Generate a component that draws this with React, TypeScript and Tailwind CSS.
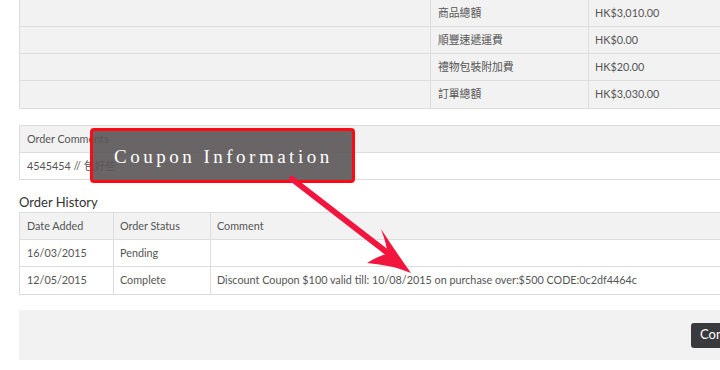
export default function App() {
  const totals = [
    { label: '商品總額', value: 'HK$3,010.00' },
    { label: '順豐速遞運費', value: 'HK$0.00' },
    { label: '禮物包裝附加費', value: 'HK$20.00' },
    { label: '訂單總額', value: 'HK$3,030.00' },
  ];

  const history = [
    { date: '16/03/2015', status: 'Pending', comment: '' },
    {
      date: '12/05/2015',
      status: 'Complete',
      comment: 'Discount Coupon $100 valid till: 10/08/2015 on purchase over:$500 CODE:0c2df4464c',
    },
  ];

  return (
    <div
      className="relative w-[720px] h-[370px] overflow-hidden bg-white text-[10.8px] text-[#555]"
      style={{ fontFamily: 'Lato, "Noto Sans CJK TC", sans-serif' }}
    >
      <div className="w-[760px] pl-[19px]">
        {/* Totals */}
        <div className="border-x border-b border-[#ddd] bg-[#f2f2f2]">
          {totals.map((row) => (
            <div key={row.label} className="flex h-[27px] border-b border-[#ddd] last:border-b-0">
              <div className="w-[411px] border-r border-[#ddd]" />
              <div className="w-[158px] border-r border-[#ddd] pl-[7px] flex items-center">{row.label}</div>
              <div className="flex-1 pl-[6px] flex items-center">{row.value}</div>
            </div>
          ))}
        </div>

        {/* Order comments */}
        <div className="mt-[16px] border border-[#ddd]">
          <div className="h-[27px] bg-[#f2f2f2] border-b border-[#ddd] pl-[7px] flex items-center">Order Comments</div>
          <div className="h-[26px] pl-[7px] flex items-center">4545454 // 包好些</div>
        </div>

        {/* Order history */}
        <div className="mt-[12px] text-[13px] text-[#333] leading-[20px]">Order History</div>
        <div className="border border-[#ddd]">
          <div className="flex h-[27px] bg-[#f2f2f2] border-b border-[#ddd]">
            <div className="w-[94px] border-r border-[#ddd] pl-[7px] flex items-center">Date Added</div>
            <div className="w-[97px] border-r border-[#ddd] pl-[6px] flex items-center">Order Status</div>
            <div className="flex-1 pl-[6px] flex items-center">Comment</div>
          </div>
          {history.map((row) => (
            <div key={row.date} className="flex h-[27px] border-b border-[#ddd] last:border-b-0">
              <div className="w-[94px] border-r border-[#ddd] pl-[7px] flex items-center">{row.date}</div>
              <div className="w-[97px] border-r border-[#ddd] pl-[6px] flex items-center">{row.status}</div>
              <div className="flex-1 pl-[6px] flex items-center">{row.comment}</div>
            </div>
          ))}
        </div>

        {/* Buttons panel */}
        <div className="mt-[15px] h-[50px] bg-[#f2f2f2] flex items-center pl-[672px]">
          <button className="h-[25px] px-[9px] rounded-[3px] bg-[#3a3a3e] text-white text-[13px]">Continue</button>
        </div>
      </div>

      {/* Coupon annotation */}
      <div
        className="absolute left-[90px] top-[128px] w-[265px] h-[55px] rounded-[4px] border-[3px] border-[#ff0a14] bg-[#5a5556]/90 flex items-center pl-[21px] pt-[4px] text-white text-[19px] tracking-[3.5px]"
        style={{ fontFamily: '"Liberation Serif", serif' }}
      >
        Coupon Information
      </div>
      <svg className="absolute left-0 top-0 pointer-events-none" width="720" height="370" viewBox="0 0 720 370">
        <line x1="292" y1="179" x2="393" y2="257" stroke="#f2163f" strokeWidth="6" strokeLinecap="round" />
        <path d="M411 273 Q396 252 381 229 Q388 248 387 254 Q378 256 367 263 Q392 265 411 273 Z" fill="#f2163f" />
      </svg>
    </div>
  );
}
